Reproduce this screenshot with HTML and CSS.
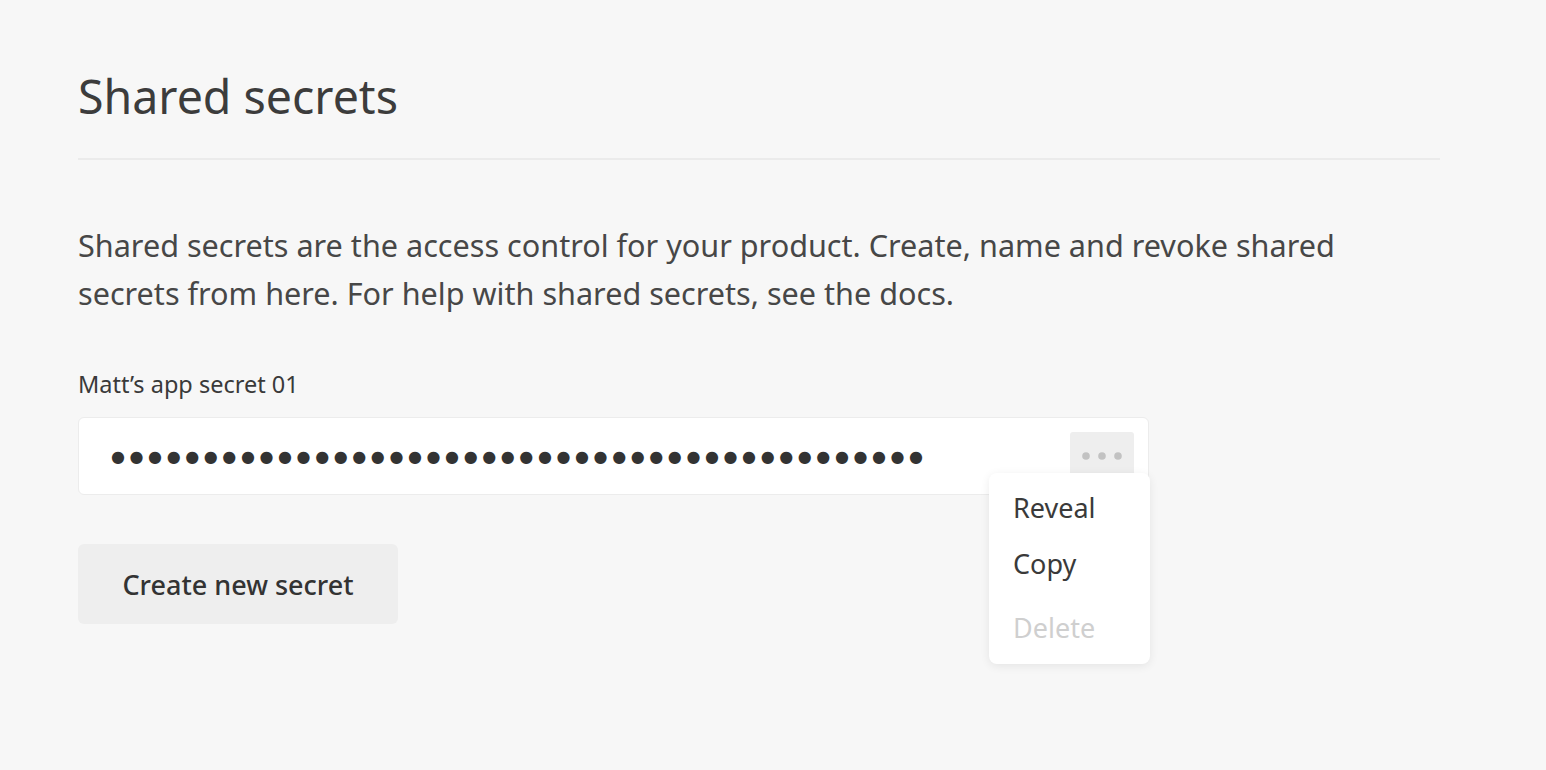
FILE: index.html
```html
<!DOCTYPE html>
<html lang="en">
<head>
<meta charset="utf-8">
<title>Shared secrets</title>
<link rel="stylesheet" href="styles.css">
</head>
<body>
<main class="page">
  <h1 class="title">Shared secrets</h1>
  <hr class="divider">
  <p class="intro">Shared secrets are the access control for your product. Create, name and revoke shared secrets from here. For help with shared secrets, see the docs.</p>
  <div class="field">
    <label class="field-label">Matt’s app secret 01</label>
    <div class="secret-box">
      <span class="secret-dots">●●●●●●●●●●●●●●●●●●●●●●●●●●●●●●●●●●●●●●●●●●●●</span>
      <button class="more-btn" aria-label="More options">
        <svg width="40" height="8" viewBox="0 0 40 8"><circle cx="4" cy="4" r="3.8" fill="#c2c2c2"/><circle cx="20" cy="4" r="3.8" fill="#c2c2c2"/><circle cx="36" cy="4" r="3.8" fill="#c2c2c2"/></svg>
      </button>
      <ul class="menu">
        <li class="menu-item">Reveal</li>
        <li class="menu-item">Copy</li>
        <li class="menu-item disabled">Delete</li>
      </ul>
    </div>
  </div>
  <button class="create-btn">Create new secret</button>
</main>
</body>
</html>
```
FILE: styles.css
```css
* { box-sizing: border-box; }
html, body { margin: 0; padding: 0; }
body {
  background: #f7f7f7;
  font-family: "Noto Sans", "DejaVu Sans", sans-serif;
  color: #3d3d3d;
  width: 1546px;
  height: 770px;
  overflow: hidden;
}
.page {
  padding: 66px 106px 0 78px;
  width: 1546px;
}
.title {
  margin: 0;
  font-size: 46.5px;
  font-weight: 400;
  line-height: 60px;
  color: #3c3c3c;
}
.divider {
  border: 0;
  height: 2px;
  background: #ebebeb;
  margin: 32px 0 0 0;
}
.intro {
  margin: 61px 0 0 0;
  font-size: 30.6px;
  line-height: 48px;
  color: #474747;
  max-width: 1300px;
}
.field { margin-top: 53px; }
.field-label {
  display: block;
  font-size: 23.5px;
  line-height: 28px;
  color: #3a3a3a;
}
.secret-box {
  position: relative;
  margin-top: 19px;
  width: 1071px;
  height: 78px;
  background: #fff;
  border: 1px solid #ececec;
  border-radius: 6px;
  display: flex;
  align-items: center;
  padding: 0 14px 0 32px;
  justify-content: space-between;
}
.secret-dots {
  font-family: "DejaVu Sans", sans-serif;
  font-size: 16px;
  letter-spacing: 4.6px;
  color: #333;
}
.more-btn {
  width: 64px;
  height: 48px;
  border: 0;
  background: #eeeeee;
  border-radius: 3px;
  display: flex;
  align-items: center;
  justify-content: center;
  padding: 0;
}
.menu {
  position: absolute;
  left: 910px;
  top: 55px;
  width: 161px;
  height: 191px;
  margin: 0;
  padding: 7px 0 0 24px;
  list-style: none;
  background: #fff;
  border-radius: 8px;
  box-shadow: 0 2px 10px rgba(0,0,0,0.08);
}
.menu-item {
  font-size: 27px;
  line-height: 56px;
  color: #3a3a3a;
}
.menu-item.disabled {
  color: #cfcfcf;
  margin-top: 8px;
}
.create-btn {
  display: block;
  margin-top: 49px;
  width: 320px;
  height: 80px;
  border: 0;
  border-radius: 6px;
  background: #eeeeee;
  font-family: "Noto Sans", "DejaVu Sans", sans-serif;
  font-size: 27px;
  font-weight: 500;
  color: #333;
}
```
